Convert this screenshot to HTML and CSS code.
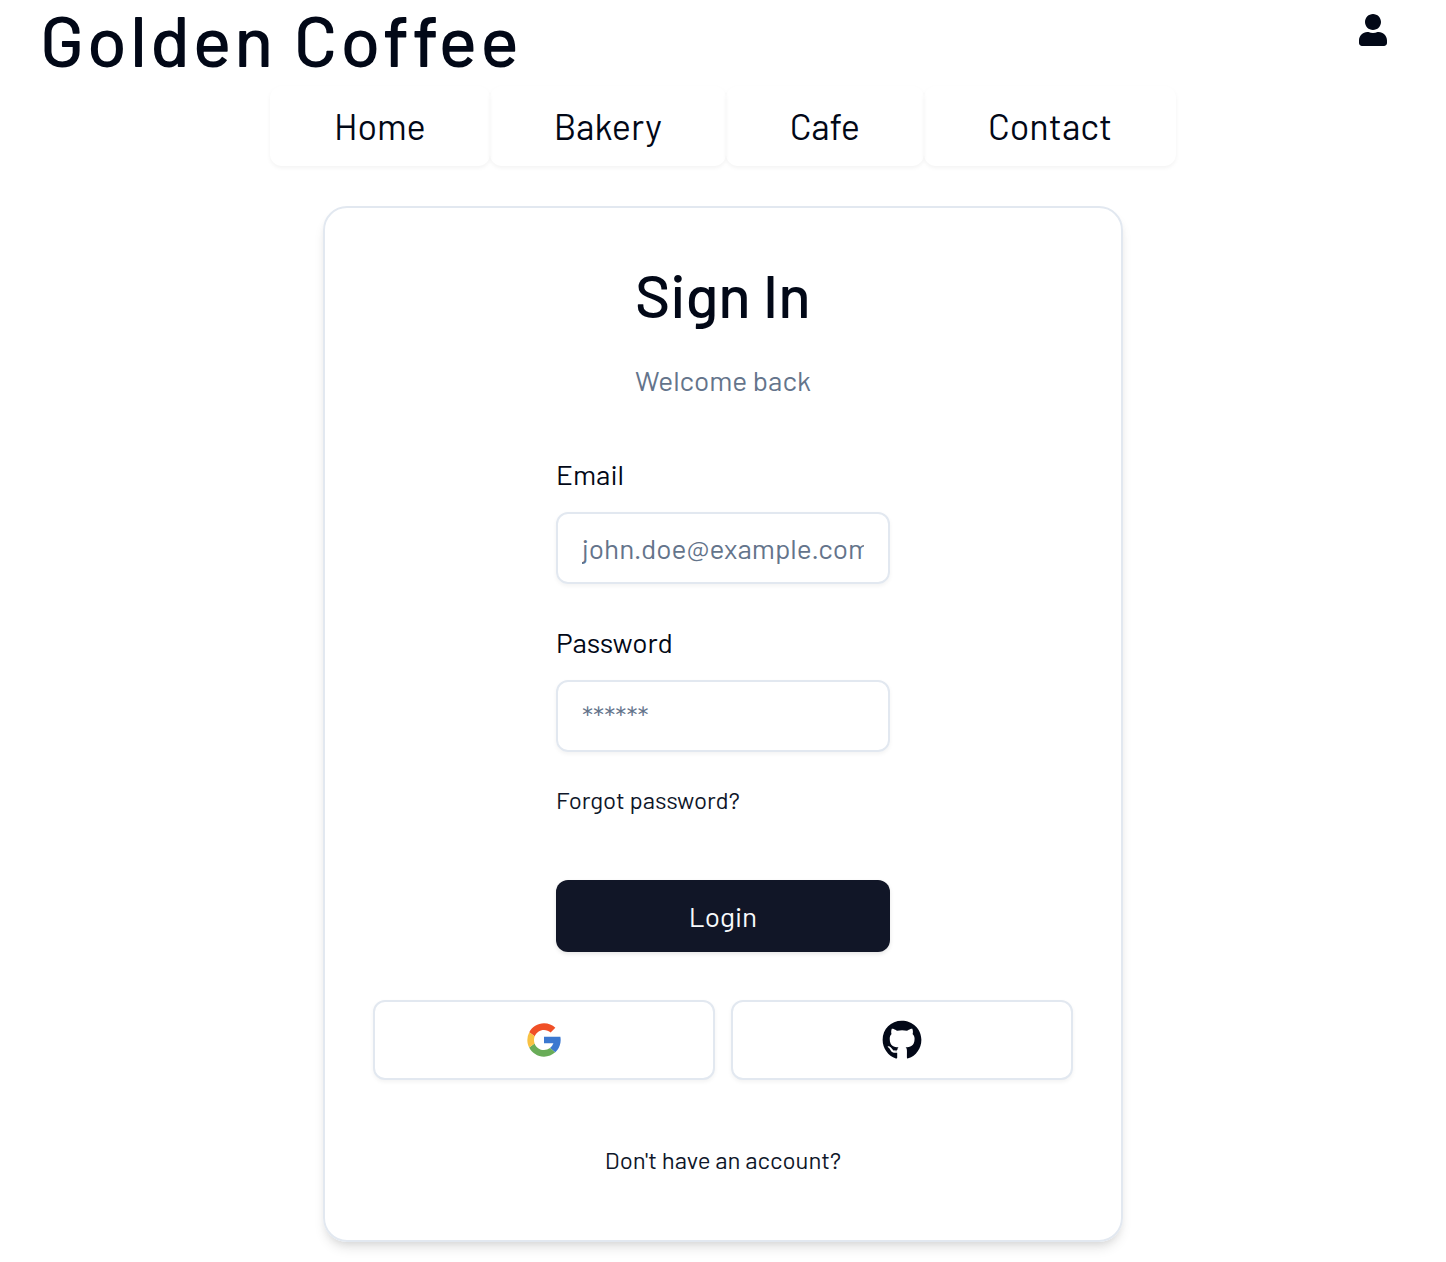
FILE: index.html
```html
<!DOCTYPE html>
<html lang="en">
<head>
  <meta charset="utf-8">
  <meta name="viewport" content="width=device-width, initial-scale=1">
  <title>Golden Coffee</title>
  <link rel="stylesheet" href="styles.css">
</head>
<body>
  <header class="site-header">
    <h1 class="brand">Golden Coffee</h1>
    <a class="account" href="#" aria-label="Account">
      <svg class="account-icon" viewBox="0 0 448 512" aria-hidden="true"><path d="M224 256c70.7 0 128-57.3 128-128S294.7 0 224 0 96 57.3 96 128s57.3 128 128 128zm89.6 32h-16.7c-22.2 10.2-46.9 16-72.9 16s-50.6-5.8-72.9-16h-16.7C60.2 288 0 348.2 0 422.4V464c0 26.5 21.5 48 48 48h352c26.5 0 48-21.5 48-48v-41.6c0-74.2-60.2-134.4-134.4-134.4z"/></svg>
    </a>
  </header>
  <nav class="site-nav">
    <a class="nav-link" href="#">Home</a>
    <a class="nav-link" href="#">Bakery</a>
    <a class="nav-link" href="#">Cafe</a>
    <a class="nav-link" href="#">Contact</a>
  </nav>
  <main class="card">
    <h2 class="card-title">Sign In</h2>
    <p class="card-subtitle">Welcome back</p>
    <form class="login-form">
      <label class="label" for="email">Email</label>
      <input class="input" id="email" type="email" placeholder="john.doe@example.com">
      <label class="label" for="password">Password</label>
      <input class="input" id="password" type="password" placeholder="******">
      <a class="text-link" href="#">Forgot password?</a>
      <button class="login-button" type="submit">Login</button>
    </form>
    <div class="social">
      <button class="social-button" type="button" aria-label="Sign in with Google">
        <svg class="social-icon" viewBox="0 0 48 48" aria-hidden="true">
          <path fill="#3b78d0" d="M43.611 20.083H42V20H24v8h11.303a12.04 12.04 0 0 1-4.087 5.571l6.19 5.238C36.971 39.205 44 34 44 24c0-1.341-.138-2.65-.389-3.917z"/>
          <path fill="#f04f26" d="m6.306 14.691 6.571 4.819C14.655 15.108 18.961 12 24 12c3.059 0 5.842 1.154 7.961 3.039l5.657-5.657C34.046 6.053 29.268 4 24 4 16.318 4 9.656 8.337 6.306 14.691z"/>
          <path fill="#69ac58" d="M24 44c5.166 0 9.86-1.977 13.409-5.192l-6.19-5.238A11.91 11.91 0 0 1 24 36c-5.202 0-9.619-3.317-11.283-7.946l-6.522 5.025C9.505 39.556 16.227 44 24 44z"/>
          <path fill="#f8c142" d="M12.717 28.054A11.99 11.99 0 0 1 12 24c0-1.58.318-3.09.877-4.49l-6.571-4.819A19.92 19.92 0 0 0 4 24c0 3.27.79 6.36 2.195 9.079z"/>
        </svg>
      </button>
      <button class="social-button" type="button" aria-label="Sign in with GitHub">
        <svg class="social-icon" viewBox="0 0 496 512" aria-hidden="true"><path d="M165.9 397.4c0 2-2.3 3.6-5.2 3.6-3.3.3-5.6-1.3-5.6-3.6 0-2 2.3-3.6 5.2-3.6 3-.3 5.6 1.3 5.6 3.6zm-31.1-4.5c-.7 2 1.3 4.3 4.3 4.9 2.6 1 5.6 0 6.2-2s-1.3-4.3-4.3-5.2c-2.6-.7-5.5.3-6.2 2.3zm44.2-1.7c-2.9.7-4.9 2.6-4.6 4.9.3 2 2.9 3.3 5.9 2.6 2.9-.7 4.9-2.6 4.6-4.6-.3-1.9-3-3.2-5.9-2.9zM244.8 8C106.1 8 0 113.3 0 252c0 110.9 69.8 205.8 169.5 239.2 12.8 2.3 17.3-5.6 17.3-12.1 0-6.2-.3-40.4-.3-61.4 0 0-70 15-84.7-29.8 0 0-11.4-29.1-27.8-36.6 0 0-22.9-15.7 1.6-15.4 0 0 24.9 2 38.6 25.8 21.9 38.6 58.6 27.5 72.9 20.9 2.3-16 8.8-27.1 16-33.7-55.9-6.2-112.3-14.3-112.3-110.5 0-27.5 7.6-41.3 23.6-58.9-2.6-6.5-11.1-33.3 2.6-67.9 20.9-6.5 69 27 69 27 20-5.6 41.5-8.5 62.8-8.5s42.8 2.9 62.8 8.5c0 0 48.1-33.6 69-27 13.7 34.7 5.2 61.4 2.6 67.9 16 17.7 25.8 31.5 25.8 58.9 0 96.5-58.9 104.2-114.8 110.5 9.2 7.9 17 22.9 17 46.4 0 33.7-.3 75.4-.3 83.6 0 6.5 4.6 14.4 17.3 12.1C428.2 457.8 496 362.9 496 252 496 113.3 383.5 8 244.8 8z"/></svg>
      </button>
    </div>
    <a class="text-link signup-link" href="#">Don't have an account?</a>
  </main>
</body>
</html>
```
FILE: styles.css
```css
*,
*::before,
*::after {
  box-sizing: border-box;
}

body {
  margin: 0;
  background: #fff;
  color: #020817;
  font-family: Barlow, Roboto, "Liberation Sans", sans-serif;
  font-size: 28px;
  line-height: 40px;
}

h1,
h2,
p {
  margin: 0;
}

a {
  color: inherit;
  text-decoration: none;
}

input,
button {
  font: inherit;
}

svg {
  display: block;
  fill: currentColor;
}

.site-header {
  display: flex;
  justify-content: space-between;
  align-items: flex-start;
  padding: 6px 59px 16px 40px;
}

.brand {
  font-size: 72px;
  font-weight: 500;
  letter-spacing: 3px;
  line-height: 64px;
}

.account {
  padding-top: 8px;
}

.account-icon {
  width: 28px;
  height: 32px;
}

.site-nav {
  display: flex;
  justify-content: center;
}

.nav-link {
  padding: 20px 64px;
  border-radius: 12px;
  box-shadow: 0 2px 4px rgba(0, 0, 0, 0.05);
  font-size: 36px;
}

.card {
  display: flex;
  flex-direction: column;
  align-items: center;
  width: 100%;
  max-width: 800px;
  margin: 40px auto 20px;
  padding: 48px;
  border: 2px solid #e2e8f0;
  border-radius: 24px;
  box-shadow: 0 8px 12px -2px rgba(0, 0, 0, 0.1), 0 4px 8px -4px rgba(0, 0, 0, 0.1);
}

.card-title {
  font-size: 60px;
  font-weight: 500;
  line-height: 76px;
}

.card-subtitle {
  margin-top: 28px;
  color: #64748b;
}

.login-form {
  display: flex;
  flex-direction: column;
  width: 100%;
  max-width: 334px;
  margin-top: 56px;
}

.label {
  line-height: 36px;
}

.input {
  width: 100%;
  height: 72px;
  margin: 20px 0 40px;
  padding: 8px 24px;
  border: 2px solid #e2e8f0;
  border-radius: 12px;
  background: transparent;
  box-shadow: 0 2px 4px rgba(0, 0, 0, 0.05);
  color: inherit;
}

.input::placeholder {
  color: #64748b;
  opacity: 1;
}

.text-link {
  align-self: flex-start;
  color: #0f172a;
  font-size: 24px;
  line-height: 32px;
}

.input + .text-link {
  margin-top: -8px;
}

.login-button {
  height: 72px;
  margin-top: 64px;
  border: 0;
  border-radius: 12px;
  background: #111627;
  box-shadow: 0 2px 4px rgba(0, 0, 0, 0.1);
  color: #f8fafc;
}

.social {
  display: grid;
  grid-template-columns: 1fr 1fr;
  gap: 16px;
  width: 100%;
  margin-top: 48px;
}

.social-button {
  display: flex;
  align-items: center;
  justify-content: center;
  height: 80px;
  border: 2px solid #e2e8f0;
  border-radius: 12px;
  background: #fff;
  box-shadow: 0 2px 4px rgba(0, 0, 0, 0.05);
  color: #020817;
}

.social-icon {
  width: 40px;
  height: 40px;
}

.signup-link {
  align-self: center;
  margin: 64px 0 16px;
}
```
